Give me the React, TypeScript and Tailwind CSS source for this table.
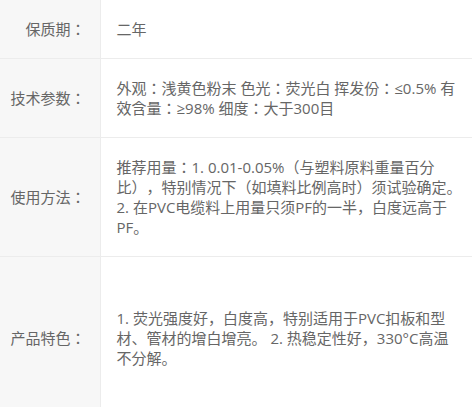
const rows = [
  { label: "保质期：", lines: ["二年"], pad: "py-[19px]" },
  {
    label: "技术参数：",
    lines: ["外观：浅黄色粉末 色光：荧光白 挥发份：≤0.5% 有", "效含量：≥98% 细度：大于300目"],
    pad: "py-[19px]",
  },
  {
    label: "使用方法：",
    lines: [
      "推荐用量：1. 0.01-0.05%（与塑料原料重量百分",
      "比），特别情况下（如填料比例高时）须试验确定。",
      "2. 在PVC电缆料上用量只须PF的一半，白度远高于",
      "PF。",
    ],
    pad: "py-[19px]",
  },
  {
    label: "产品特色：",
    lines: [
      "1. 荧光强度好，白度高，特别适用于PVC扣板和型",
      "材、管材的增白增亮。 2. 热稳定性好，330°C高温",
      "不分解。",
    ],
    pad: "py-[51px]",
  },
];

export default function App() {
  return (
    <div
      lang="ja"
      className="w-[472px] h-[407px] overflow-hidden bg-white font-['Open_Sans','Noto_Sans_CJK_JP',sans-serif] text-[15px] leading-[20px] text-[#666] [text-spacing-trim:space-all]"
    >
      <table className="w-[500px] border-collapse">
        <tbody>
          {rows.map((row) => (
            <tr key={row.label} className="border-b border-[#ececec]">
              <td className="w-[100px] bg-[#f7f7f7] border-r border-[#ececec] pr-[14px] text-right align-middle whitespace-nowrap">
                {row.label}
              </td>
              <td className={`pl-4 pr-4 align-middle whitespace-nowrap ${row.pad}`}>
                {row.lines.map((line, i) => (
                  <div key={i}>{line}</div>
                ))}
              </td>
            </tr>
          ))}
        </tbody>
      </table>
    </div>
  );
}
